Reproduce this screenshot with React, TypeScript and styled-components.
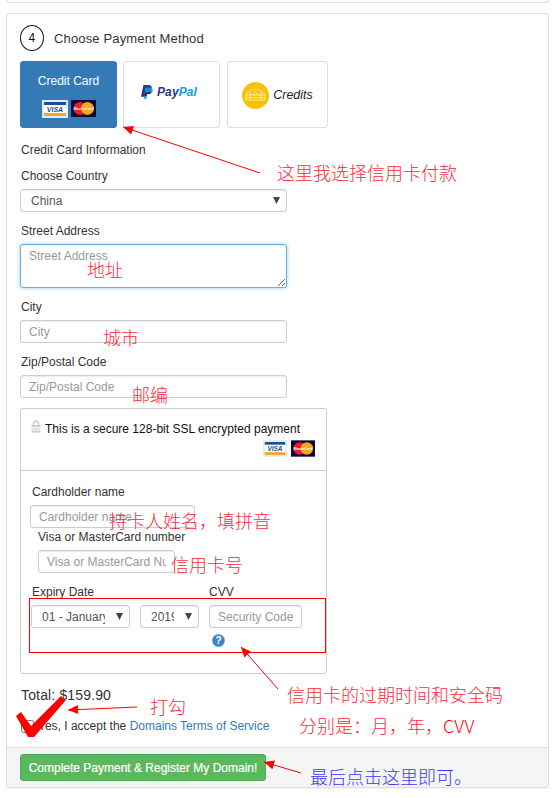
import React from "react";
import styled, { createGlobalStyle } from "styled-components";

const Global = createGlobalStyle`
  html, body { margin: 0; padding: 0; background: #fff; }
  body { font-family: "Liberation Sans", Arial, sans-serif; font-size: 12px; color: #333; }
  * { box-sizing: border-box; }
`;

const Page = styled.div`
  position: relative;
  width: 558px;
  height: 798px;
  overflow: hidden;
`;
const PrevPanel = styled.div`
  height: 3px;
  margin: 0 9px 10px 6px;
  border: 1px solid #ddd;
  border-top: 0;
  border-radius: 0 0 3px 3px;
`;
const Panel = styled.section`
  width: 543px;
  height: 775px;
  margin-left: 6px;
  border: 1px solid #ddd;
  border-radius: 3px;
  display: flex;
  flex-direction: column;
  box-shadow: 0 1px 1px rgba(0, 0, 0, 0.05);
`;
const Body = styled.div`
  flex: 1;
  padding: 11px 13px 0;
`;
const Heading = styled.div`
  display: flex;
  align-items: center;
  gap: 10px;
  height: 26px;
  font-size: 13px;
  letter-spacing: 0.15px;
  color: #333;
`;
const StepBadge = styled.span`
  width: 24px;
  height: 26px;
  border: 1px solid #111;
  border-radius: 50%;
  display: flex;
  align-items: center;
  justify-content: center;
  font-size: 12px;
  color: #111;
`;
const Tabs = styled.div`
  display: flex;
  gap: 6px;
  margin-top: 10px;
`;
const Tab = styled.div<{ $w: number; $active?: boolean; $shift?: number }>`
  width: ${(p) => p.$w}px;
  height: 67px;
  margin-left: ${(p) => p.$shift ?? 0}px;
  border-radius: 3px;
  border: 1px solid ${(p) => (p.$active ? "#337ab7" : "#ddd")};
  background: ${(p) => (p.$active ? "#337ab7" : "#fff")};
  color: #fff;
  display: flex;
  flex-direction: column;
  align-items: center;
  justify-content: center;
`;
const TabTitle = styled.div`
  font-size: 12px;
  margin: 2px 0 13px;
`;
const CardIcons = styled.div`
  display: flex;
  gap: 3px;
  align-items: center;
  margin-top: -1px;
`;
const PayPalRow = styled.div`
  display: flex;
  align-items: center;
  gap: 4px;
  margin: -6px 5px 0 0;
`;
const PayPalText = styled.span`
  font-size: 12px;
  font-weight: bold;
  font-style: italic;
  letter-spacing: 0.1px;
  color: #253b80;
`;
const PayPalAccent = styled.span`
  color: #179bd7;
`;
const CreditsRow = styled.div`
  display: flex;
  align-items: center;
  gap: 4px;
  margin-top: 1px;
`;
const CreditsText = styled.span`
  font-size: 12.5px;
  font-style: italic;
  color: #222;
`;
const SectionLabel = styled.div`
  margin: 15px 0 0 1px;
  height: 14px;
  line-height: 14px;
`;
const Label = styled.label<{ $top: number; $left?: number }>`
  display: block;
  margin-top: ${(p) => p.$top}px;
  margin-left: ${(p) => p.$left ?? 1}px;
  height: 14px;
  line-height: 14px;
  white-space: nowrap;
`;
const controlCss = `
  display: block;
  height: 23px;
  border: 1px solid #ccc;
  border-radius: 3px;
  background-color: #fff;
  font-family: "Liberation Sans", Arial, sans-serif;
  font-size: 12px;
  color: #555;
  box-shadow: inset 0 1px 1px rgba(0,0,0,.075);
  outline: none;
  &::placeholder { color: #999; opacity: 1; }
`;
const Select = styled.select<{ $w: number }>`
  ${controlCss}
  width: ${(p) => p.$w}px;
  padding: 0 24px 0 10px;
  appearance: none;
  background-image: url("data:image/svg+xml,%3Csvg xmlns='http://www.w3.org/2000/svg' width='7' height='7'%3E%3Cpath d='M0 0h7L3.500 7z' fill='%23444'/%3E%3C/svg%3E");
  background-repeat: no-repeat;
  background-position: right 6px center;
`;
const Input = styled.input<{ $w: number; $left?: number; $top?: number }>`
  ${controlCss}
  width: ${(p) => p.$w}px;
  margin-left: ${(p) => p.$left ?? 0}px;
  margin-top: ${(p) => p.$top ?? 0}px;
  padding: 0 8px;
`;
const TextArea = styled.textarea`
  ${controlCss}
  width: 267px;
  height: 44px;
  padding: 4px 8px;
  border-color: #66afe9;
  box-shadow: inset 0 1px 1px rgba(0,0,0,.075), 0 0 4px rgba(102,175,233,.6);
  resize: vertical;
`;
const Gap = styled.div<{ $h: number }>`
  height: ${(p) => p.$h}px;
`;
const SecureBox = styled.div`
  width: 307px;
  height: 266px;
  margin-top: 10px;
  border: 1px solid #ccc;
  border-radius: 3px;
`;
const SecureHead = styled.div`
  height: 62px;
  padding: 12px 11px 0 10px;
  border-bottom: 1px solid #ccc;
  color: #111;
`;
const SecureLine = styled.div`
  display: flex;
  align-items: center;
  gap: 4px;
  height: 16px;
`;
const SecureCards = styled.div`
  display: flex;
  justify-content: flex-end;
  gap: 4px;
  margin-top: 3px;
`;
const SecureBody = styled.div`
  padding: 14px 10px 0 11px;
`;
const ExpiryLabels = styled.div`
  display: grid;
  grid-template-columns: 177px auto;
  margin-top: 12px;
  height: 14px;
  line-height: 14px;
`;
const ExpiryRow = styled.div`
  display: flex;
  gap: 10px;
  margin: 6px 0 0 -1px;
`;
const HelpRow = styled.div`
  padding-left: 180px;
  margin-top: 6px;
  height: 13px;
`;
const Total = styled.div`
  margin: 13px 0 0 1px;
  font-size: 14px;
  letter-spacing: 0.15px;
  height: 16px;
  line-height: 16px;
`;
const Terms = styled.div`
  display: flex;
  align-items: center;
  gap: 4px;
  margin: 16px 0 0 1px;
  height: 14px;
`;
const Check = styled.input`
  width: 13px;
  height: 13px;
  margin: 0;
`;
const TermsLink = styled.a`
  color: #337ab7;
  text-decoration: none;
`;
const Footer = styled.div`
  height: 40px;
  padding: 6px 13px;
  background: #f5f5f5;
  border-top: 1px solid #ddd;
`;
const Submit = styled.button`
  width: 246px;
  height: 27px;
  padding: 0;
  border: 1px solid #4cae4c;
  border-radius: 3px;
  background: #5cb85c;
  color: #fff;
  font-family: "Liberation Sans", Arial, sans-serif;
  font-size: 12px;
  font-weight: normal;
  -webkit-text-stroke: 0.2px #fff;
`;
const RedFrame = styled.div`
  position: absolute;
  left: 29px;
  top: 598px;
  width: 297px;
  height: 55px;
  border: 1px solid #f00;
  pointer-events: none;
`;
const Note = styled.div<{ $x: number; $y: number; $blue?: boolean }>`
  position: absolute;
  left: ${(p) => p.$x - 1}px;
  top: ${(p) => p.$y - 13}px;
  height: 24px;
  line-height: 24px;
  font-family: "Noto Sans CJK SC", sans-serif;
  font-size: 18px;
  font-weight: 300;
  white-space: nowrap;
  color: ${(p) => (p.$blue ? "#3a3aff" : "#ff2a3c")};
`;
const NoteLatin = styled.span`
  color: #f00;
`;
const Overlay = styled.svg`
  position: absolute;
  left: 0;
  top: 0;
  pointer-events: none;
`;

const Visa = ({ w = 26, h = 18 }: { w?: number; h?: number }) => (
  <svg width={w} height={h} viewBox="0 0 26 18">
    <rect width="26" height="18" fill="#e6e9ee" />
    <rect x="2" y="2" width="22" height="3" fill="#1a4f8f" />
    <rect x="2" y="5" width="22" height="8" fill="#fff" />
    <rect x="2" y="13" width="22" height="3" fill="#f7a823" />
    <text x="13" y="12" textAnchor="middle" fontFamily="Liberation Sans" fontSize="7" fontWeight="bold" fontStyle="italic" fill="#1a4f8f">VISA</text>
  </svg>
);
const Master = ({ w = 25, h = 17 }: { w?: number; h?: number }) => (
  <svg width={w} height={h} viewBox="0 0 25 17">
    <rect width="25" height="17" fill="#0a0a3c" />
    <circle cx="9" cy="8.5" r="6.5" fill="#ee1c25" />
    <circle cx="16.5" cy="8.5" r="6.5" fill="#f9a61a" />
    <text x="12.5" y="10" textAnchor="middle" fontFamily="Liberation Sans" fontSize="3.6" fontWeight="bold" fontStyle="italic" fill="#fff">MasterCard</text>
  </svg>
);
const PayPalMark = () => (
  <svg width="12" height="14" viewBox="0 0 13 15">
    <path d="M2.6 0H8c2.6 0 4 1.4 3.6 3.6-.5 2.8-2.4 4.2-5 4.2H4.4L3.6 12.6H0Z" fill="#253b80" />
    <path d="M4.6 2.6h4.8c2.4 0 3.8 1.3 3.4 3.4-.4 2.6-2.2 4-4.7 4H6.6L5.8 15H2.8Z" fill="#179bd7" opacity=".85" />
    <path d="M4 7.8h2.6c1.8 0 3.2-.7 4.1-2L10 9.6H6.6L6.2 12H3.4Z" fill="#222d65" />
  </svg>
);
const CreditsMark = () => (
  <svg width="27" height="27" viewBox="0 0 27 27">
    <circle cx="13.500" cy="13.500" r="13.500" fill="#fdbf0b" />
    <g fill="none" stroke="#fff3c4" strokeWidth="0.9">
      <path d="M4 12.500C7 8.500 10 7.500 13.500 7.500S20 8.500 23 12.500V18H4Z" />
      <path d="M4 13h19M4 15.500h19M8 9.500V18M19 9.500V18M10.500 13l3-3.500 3 3.500" />
    </g>
  </svg>
);
const Lock = () => (
  <svg width="10" height="13" viewBox="0 0 10 13" style={{ marginTop: -6 }}>
    <path d="M2.500 5V3.500a2.500 2.500 0 0 1 5 0V5" fill="none" stroke="#ccc" strokeWidth="1.300" />
    <rect x="0.500" y="5" width="9" height="2" fill="#ccc" />
    <rect x="0.500" y="7.800" width="9" height="2" fill="#ddd" />
    <rect x="0.500" y="10.600" width="9" height="2" fill="#ccc" />
  </svg>
);
const Help = () => (
  <svg width="13" height="13" viewBox="0 0 13 13" style={{ display: "block" }}>
    <circle cx="6.500" cy="6.500" r="6.300" fill="#3d85c6" />
    <text x="6.500" y="10" textAnchor="middle" fontFamily="Liberation Sans" fontSize="10" fontWeight="bold" fill="#fff">?</text>
  </svg>
);

const Arrow = ({ x1, y1, x2, y2 }: { x1: number; y1: number; x2: number; y2: number }) => {
  const a = Math.atan2(y1 - y2, x1 - x2);
  const L = 11;
  const s = 0.42;
  const px = (d: number) => `${x2 + L * Math.cos(a + d)},${y2 + L * Math.sin(a + d)}`;
  return (
    <g>
      <line x1={x1} y1={y1} x2={x2} y2={y2} stroke="#f00" strokeWidth="1" />
      <polygon points={`${x2},${y2} ${px(s)} ${px(-s)}`} fill="#f00" />
    </g>
  );
};

export default function App() {
  return (
    <Page>
      <Global />
      <PrevPanel />
      <Panel>
        <Body>
          <Heading>
            <StepBadge>4</StepBadge>
            Choose Payment Method
          </Heading>
          <Tabs>
            <Tab $w={97} $active>
              <TabTitle>Credit Card</TabTitle>
              <CardIcons>
                <Visa />
                <Master />
              </CardIcons>
            </Tab>
            <Tab $w={97}>
              <PayPalRow>
                <PayPalMark />
                <PayPalText>
                  Pay<PayPalAccent>Pal</PayPalAccent>
                </PayPalText>
              </PayPalRow>
            </Tab>
            <Tab $w={101} $shift={1}>
              <CreditsRow>
                <CreditsMark />
                <CreditsText>Credits</CreditsText>
              </CreditsRow>
            </Tab>
          </Tabs>
          <SectionLabel>Credit Card Information</SectionLabel>
          <Label $top={12}>Choose Country</Label>
          <Gap $h={6} />
          <Select $w={267} defaultValue="China">
            <option>China</option>
          </Select>
          <Label $top={12}>Street Address</Label>
          <Gap $h={6} />
          <TextArea placeholder="Street Address" />
          <Label $top={12}>City</Label>
          <Gap $h={6} />
          <Input $w={267} placeholder="City" />
          <Label $top={12}>Zip/Postal Code</Label>
          <Gap $h={6} />
          <Input $w={267} placeholder="Zip/Postal Code" />
          <SecureBox>
            <SecureHead>
              <SecureLine>
                <Lock />
                This is a secure 128-bit SSL encrypted payment
              </SecureLine>
              <SecureCards>
                <Visa w={24} h={17} />
                <Master w={24} h={17} />
              </SecureCards>
            </SecureHead>
            <SecureBody>
              <Label $top={0} $left={0}>Cardholder name</Label>
              <Input $w={165} $left={-2} $top={6} placeholder="Cardholder name" />
              <Label $top={2} $left={6}>Visa or MasterCard number</Label>
              <Input $w={137} $left={6} $top={6} placeholder="Visa or MasterCard Number" />
              <ExpiryLabels>
                <span>Expiry Date</span>
                <span>CVV</span>
              </ExpiryLabels>
              <ExpiryRow>
                <Select $w={99} defaultValue="01 - January">
                  <option>01 - January</option>
                </Select>
                <Select $w={59} defaultValue="2019">
                  <option>2019</option>
                </Select>
                <Input $w={93} placeholder="Security Code" />
              </ExpiryRow>
              <HelpRow>
                <Help />
              </HelpRow>
            </SecureBody>
          </SecureBox>
          <Total>Total: $159.90</Total>
          <Terms>
            <Check type="checkbox" />
            <span>
              Yes, I accept the <TermsLink href="#">Domains Terms of Service</TermsLink>
            </span>
          </Terms>
        </Body>
        <Footer>
          <Submit>Complete Payment &amp; Register My Domain!</Submit>
        </Footer>
      </Panel>

      <RedFrame />
      <Overlay width="558" height="798" viewBox="0 0 558 798">
        <Arrow x1={260} y1={173} x2={123} y2={127} />
        <Arrow x1={278} y1={689} x2={241} y2={647} />
        <Arrow x1={137} y1={707} x2={68} y2={710} />
        <Arrow x1={301} y1={773} x2={264} y2={762} />
        <path d="M16 716L21 712L31 726L61 696L66 700L34 737L28 737Z" fill="#f00" />
      </Overlay>
      <Note $x={278} $y={173}>这里我选择信用卡付款</Note>
      <Note $x={88} $y={270}>地址</Note>
      <Note $x={104} $y={338}>城市</Note>
      <Note $x={133} $y={395}>邮编</Note>
      <Note $x={110} $y={521}>持卡人姓名，填拼音</Note>
      <Note $x={172} $y={565}>信用卡号</Note>
      <Note $x={288} $y={695}>信用卡的过期时间和安全码</Note>
      <Note $x={300} $y={726}>分别是：月，年，<NoteLatin>CVV</NoteLatin></Note>
      <Note $x={151} $y={707}>打勾</Note>
      <Note $x={311} $y={777} $blue>最后点击这里即可。</Note>
    </Page>
  );
}
